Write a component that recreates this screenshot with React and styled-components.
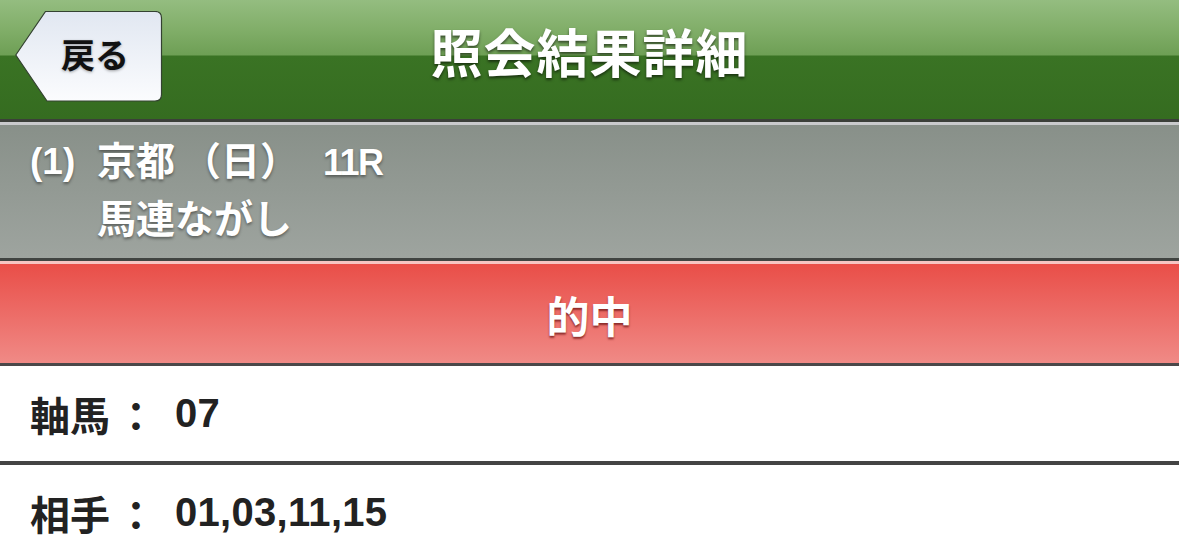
import React from "react";
import styled, { createGlobalStyle } from "styled-components";

const Global = createGlobalStyle`
  html, body { margin: 0; padding: 0; background: #ffffff; }
  body {
    font-family: "Liberation Sans", "Noto Sans CJK JP", sans-serif;
    -webkit-font-smoothing: antialiased;
  }
`;

const Page = styled.div`
  width: 1179px;
  min-height: 549px;
  display: flex;
  flex-direction: column;
  overflow: hidden;
`;

const Header = styled.header`
  height: 119px;
  display: grid;
  grid-template-columns: 1fr auto 1fr;
  align-items: center;
  background: linear-gradient(
    to bottom,
    #94bd80 0px,
    #82af6a 28px,
    #6e9f55 55px,
    #3a7324 56px,
    #356c20 119px
  );
  border-bottom: 3px solid #3b3f39;
  box-shadow: 0 3px 0 #c9cacc;
  margin-bottom: 3px;
`;

const BackButton = styled.button`
  position: relative;
  justify-self: start;
  align-self: start;
  margin-left: 15px;
  margin-top: 11px;
  width: 148px;
  height: 91px;
  padding: 0 0 0 46px;
  border: none;
  background: transparent;
  display: flex;
  align-items: center;
  cursor: pointer;
  font-family: "Liberation Sans", "Noto Sans CJK JP", sans-serif;
`;

const ButtonShape = styled.svg`
  position: absolute;
  left: 0;
  top: 0;
`;

const ButtonLabel = styled.span`
  position: relative;
  font-size: 34px;
  font-weight: 700;
  color: #111111;
  line-height: 1;
  margin-top: -2px;
  text-shadow: 0 1px 3px rgba(0, 0, 0, 0.35);
`;

const Title = styled.h1`
  margin: 0 0 10px 0;
  font-size: 52px;
  font-weight: 700;
  color: #ffffff;
  line-height: 1;
  letter-spacing: 1px;
  text-shadow: 0 2px 3px rgba(0, 0, 0, 0.55);
`;

const RaceInfo = styled.section`
  display: flex;
  padding: 8px 0 10px 30px;
  background: linear-gradient(to bottom, #889089, #9ea49f);
  border-bottom: 3px solid #404441;
  box-shadow: 0 3px 0 #f6c4c2;
  margin-bottom: 3px;
  color: #ffffff;
  font-size: 39px;
  font-weight: 700;
  line-height: 57px;
  text-shadow: 0 2px 3px rgba(0, 0, 0, 0.4);
`;

const RaceNo = styled.div`
  width: 67px;
  flex: none;
  font-size: 37px;
`;

const RaceLines = styled.div`
  display: flex;
  flex-direction: column;
`;

const RaceDay = styled.span`
  margin-left: 7px;
`;

const RaceCode = styled.span`
  font-size: 36px;
  letter-spacing: -1.5px;
  margin-left: 24px;
`;

const ResultBar = styled.section`
  height: 99px;
  display: flex;
  align-items: center;
  justify-content: center;
  background: linear-gradient(to bottom, #e94e48, #f08a86);
  border-bottom: 3px solid #4a4849;
  color: #ffffff;
  font-size: 43px;
  font-weight: 700;
  text-shadow: 0 2px 2px rgba(110, 20, 20, 0.75);
`;

const Row = styled.div`
  height: ${(p) => p.$h}px;
  display: flex;
  align-items: center;
  padding-left: 30px;
  border-bottom: ${(p) => (p.$last ? "none" : "4px solid #444444")};
  color: #222222;
  font-size: 40px;
  font-weight: 700;
`;

const Label = styled.span`
  width: 145px;
  flex: none;
`;

const Colon = styled.span`
  margin-left: 6px;
`;

const Value = styled.span`
  letter-spacing: 0.3px;
`;

function BackShape() {
  return (
    <ButtonShape width="148" height="91" viewBox="0 0 148 91">
      <defs>
        <linearGradient id="bk" x1="0" y1="0" x2="0" y2="1">
          <stop offset="0" stopColor="#e1e7f1" />
          <stop offset="1" stopColor="#fbfcfe" />
        </linearGradient>
      </defs>
      <path
        d="M0.8,44 L30.5,0.5 H140 Q146.5,0.5 146.5,7 V83.5 Q146.5,90 140,90 H32 Z"
        fill="url(#bk)"
        stroke="#344231"
        strokeWidth="1.2"
      />
    </ButtonShape>
  );
}

export default function App() {
  return (
    <Page>
      <Global />
      <Header>
        <BackButton>
          <BackShape />
          <ButtonLabel>戻る</ButtonLabel>
        </BackButton>
        <Title>照会結果詳細</Title>
        <div />
      </Header>
      <RaceInfo>
        <RaceNo>(1)</RaceNo>
        <RaceLines>
          <span>
            京都<RaceDay>（日）</RaceDay>
            <RaceCode>11R</RaceCode>
          </span>
          <span>馬連ながし</span>
        </RaceLines>
      </RaceInfo>
      <ResultBar>的中</ResultBar>
      <Row $h={95}>
        <Label>
          軸馬<Colon>：</Colon>
        </Label>
        <Value>07</Value>
      </Row>
      <Row $h={95} $last>
        <Label>
          相手<Colon>：</Colon>
        </Label>
        <Value>01,03,11,15</Value>
      </Row>
    </Page>
  );
}
